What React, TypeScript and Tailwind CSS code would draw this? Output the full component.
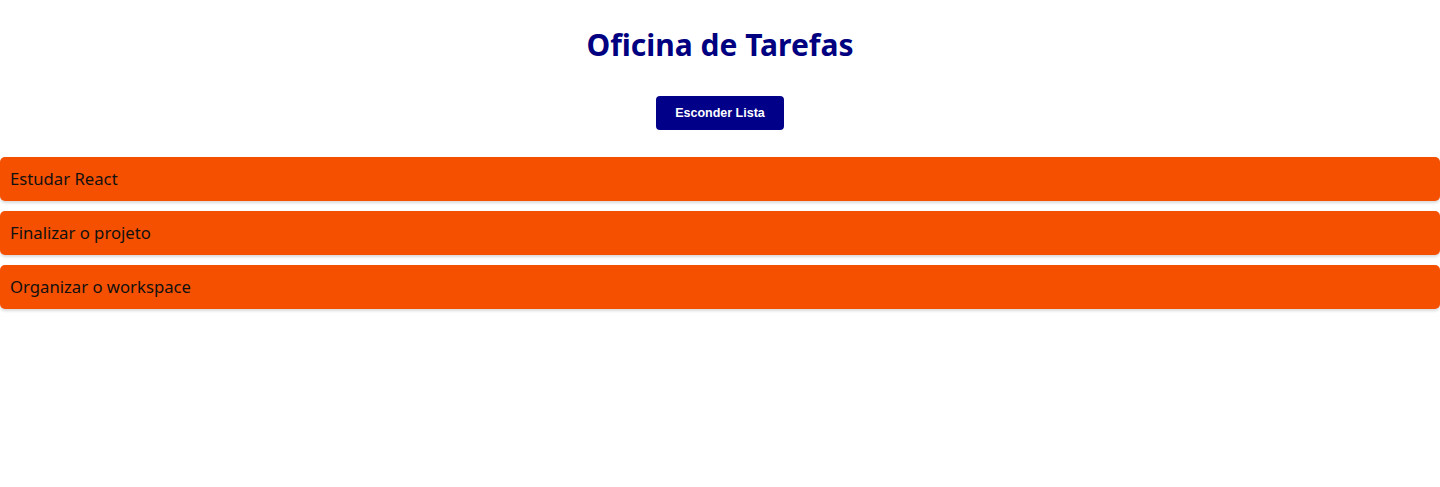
const tarefas = ['Estudar React', 'Finalizar o projeto', 'Organizar o workspace'];

export default function App() {
    return (
        <div className="min-h-[487px] bg-white font-['Noto_Sans',sans-serif]">
            <h1 className="text-center text-[30px] font-bold text-[#000080] leading-[43px] pt-[23px] pb-[30px]">
                Oficina de Tarefas
            </h1>
            <div className="flex justify-center">
                <button className="w-[128px] h-[34px] rounded-[4px] bg-[#000088] text-white text-[12.5px] font-bold font-['Liberation_Sans',sans-serif]">
                    Esconder Lista
                </button>
            </div>
            <ul className="mt-[27px] flex flex-col gap-[10px]">
                {tarefas.map((t) => (
                    <li
                        key={t}
                        className="h-[44px] flex items-center px-[10px] rounded-[5px] bg-[#f55000] text-[16.7px] text-[#111] shadow-[0_2px_3px_rgba(0,0,0,0.15)]"
                    >
                        {t}
                    </li>
                ))}
            </ul>
        </div>
    );
}
